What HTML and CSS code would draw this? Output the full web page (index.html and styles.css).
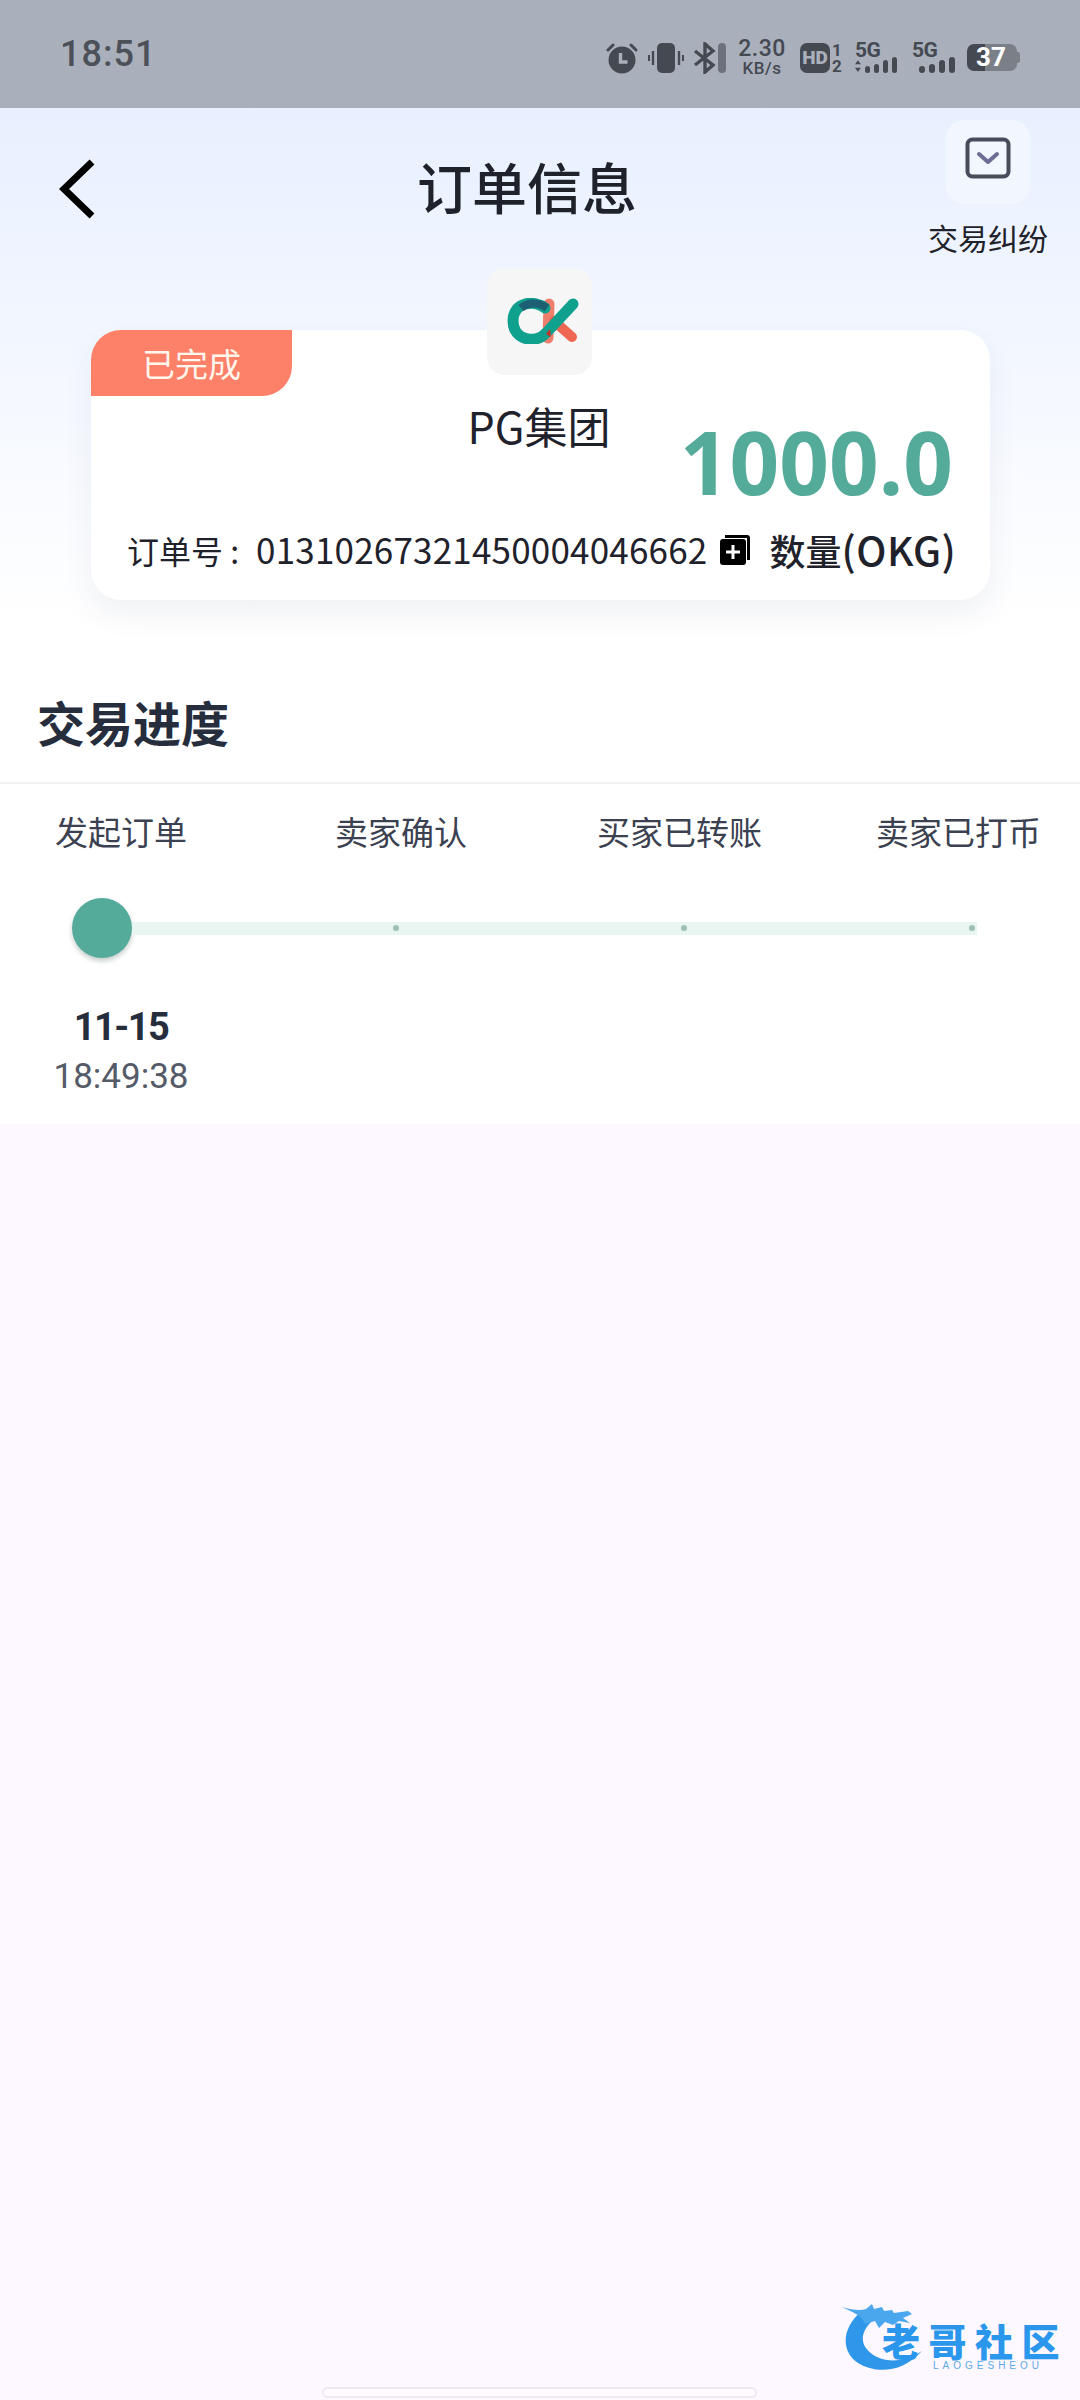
FILE: index.html
```html
<!DOCTYPE html>
<html lang="zh-CN">
  <head>
    <meta charset="UTF-8" />
    <meta name="viewport" content="width=device-width, initial-scale=1.0" />
    <title>订单信息</title>
    <link rel="stylesheet" href="styles.css">
  </head>
  <body>
    <header class="status-bar">
      <span class="time">18:51</span>
      <div class="status-icons">
        <svg class="icon-alarm" width="32" height="32" viewBox="0 0 32 32">
          <circle cx="16" cy="18" r="13.5" fill="#454952"/>
          <path d="M14.5 11v9h7" fill="none" stroke="#a9b0bb" stroke-width="3.4"/>
          <path d="M2 8l5-5M30 8l-5-5" stroke="#454952" stroke-width="3" stroke-linecap="round"/>
        </svg>
        <svg class="icon-vibrate" width="36" height="32" viewBox="0 0 36 32">
          <rect x="9" y="1" width="18" height="30" rx="5" fill="#454952"/>
          <path d="M5 9v14M31 9v14" stroke="#454952" stroke-width="2.4"/>
          <path d="M1 13v6M35 13v6" stroke="#454952" stroke-width="2"/>
        </svg>
        <svg class="icon-bt" width="34" height="32" viewBox="0 0 34 32">
          <path d="M2 9l18 14-8 7V2l8 7L2 23" fill="none" stroke="#454952" stroke-width="3.4"/>
          <rect x="25" y="1" width="8" height="30" rx="4" fill="#6c717b"/>
        </svg>
        <div class="net-speed">
          <span class="speed-value">2.30</span>
          <span class="speed-unit">KB/s</span>
        </div>
        <div class="hd-group">
          <span class="hd">HD</span>
          <div class="hd-nums">
            <span>1</span>
            <span>2</span>
          </div>
        </div>
        <div class="signal">
          <span class="signal-label">5G</span>
          <div class="bars">
            <svg class="arrows" width="7" height="14" viewBox="0 0 7 14">
              <path d="M3.5 0L7 5H0zM3.5 14L7 9H0z" fill="#454952"/>
            </svg>
            <i class="b1"></i><i class="b2"></i><i class="b3"></i><i class="b4"></i>
          </div>
        </div>
        <div class="signal signal-second">
          <span class="signal-label">5G</span>
          <div class="bars">
            <i class="b1"></i><i class="b2"></i><i class="b3"></i><i class="b4"></i>
          </div>
        </div>
        <div class="battery">
          <div class="battery-body">
            <span class="battery-num">37</span>
          </div>
          <div class="battery-cap"></div>
        </div>
      </div>
    </header>

    <section class="top-area">
      <div class="nav">
        <a class="back" href="#">
          <svg width="36" height="60" viewBox="0 0 36 60">
            <path d="M33 3L5 30l28 27" fill="none" stroke="#000" stroke-width="7"/>
          </svg>
        </a>
        <h1 class="page-title">订单信息</h1>
        <a class="dispute" href="#">
          <span class="dispute-btn">
            <svg width="46" height="42" viewBox="0 0 46 42">
              <rect x="2.5" y="2.5" width="41" height="37" rx="5" fill="none" stroke="#474c5b" stroke-width="4"/>
              <path d="M14 17l9 8 9-8" fill="none" stroke="#6b6d94" stroke-width="4" stroke-linecap="round" stroke-linejoin="round"/>
            </svg>
          </span>
          <span class="dispute-text">交易纠纷</span>
        </a>
      </div>

      <div class="order-wrap">
        <div class="logo-box">
          <svg width="72" height="46" viewBox="0 0 72 46">
            <path d="M42 6L41 40" fill="none" stroke="#ef7f6c" stroke-width="11" stroke-linecap="round"/>
            <path d="M47 23L65 39" fill="none" stroke="#ee6752" stroke-width="10" stroke-linecap="round"/>
            <path d="M38 10C28 2 6 3 6 23c0 20 24 23 33 12L66 6" fill="none" stroke="#10a08e" stroke-width="11" stroke-linecap="round"/>
            <path d="M14 10c7-6 18-6 26 0" fill="none" stroke="#1d5f73" stroke-width="8"/>
            <path d="M39 36l4-5 1 8z" fill="#c8322c"/>
          </svg>
        </div>
        <div class="order-card">
          <div class="badge">已完成</div>
          <div class="group-name">PG集团</div>
          <div class="amount">1000.0</div>
          <div class="order-row">
            <div class="order-no">
              <span class="order-label">订单号 :</span>
              <span class="order-digits">01310267321450004046662</span>
            </div>
            <svg class="copy" width="32" height="32" viewBox="0 0 32 32">
              <path d="M6 1h22a3 3 0 0 1 3 3v22h-3V4H6z" fill="#000"/>
              <rect x="1" y="5" width="26" height="26" rx="3" fill="#000"/>
              <path d="M14 11v14M7 18h14" stroke="#fff" stroke-width="3"/>
            </svg>
            <span class="qty">数量<span class="qty-unit">(OKG)</span></span>
          </div>
        </div>
      </div>
    </section>

    <section class="progress">
      <h2 class="progress-title">交易进度</h2>
      <div class="steps">
        <span>发起订单</span>
        <span>卖家确认</span>
        <span>买家已转账</span>
        <span>卖家已打币</span>
      </div>
      <div class="track">
        <div class="knob"></div>
        <div class="line">
          <i class="dot"></i>
          <i class="dot"></i>
          <i class="dot"></i>
        </div>
      </div>
      <div class="stamp">
        <div class="stamp-date">11-15</div>
        <div class="stamp-time">18:49:38</div>
      </div>
    </section>

    <div class="rest"></div>

    <div class="watermark">
      <svg class="dragon" width="84" height="72" viewBox="0 0 84 72">
        <path d="M20 8C0 24-2 48 16 60c18 11 44 10 64-12-18 12-38 12-50 3C16 41 18 26 36 13z" fill="#2f97ea"/>
        <path d="M0 4c10 3 18 4 24 2l6-5 2 5 8-2 2 4 8-1 2 3 14-2 4 3-9 4 7 5-11-2-6 4-8-3-6 6-4-7-10 3C20 12 10 9 0 4z" fill="#4aa7ee"/>
      </svg>
      <div class="mark-text">
        <div class="mark-cn">老哥社区</div>
        <div class="mark-en">LAOGESHEOU</div>
      </div>
    </div>

    <div class="home-bar"></div>
  </body>
</html>
```

FILE: styles.css
```css
* {
  margin: 0;
  padding: 0;
  box-sizing: border-box;
}

html,
body {
  width: 1080px;
  height: 2400px;
  overflow: hidden;
}

body {
  position: relative;
  display: flex;
  flex-direction: column;
  font-family: "Noto Sans CJK SC", "Noto Sans", sans-serif;
  background-color: #fdf7ff;
  color: #1f222b;
}

a {
  color: inherit;
  text-decoration: none;
}

/* status bar */
.status-bar {
  height: 108px;
  background-color: #a9b0bb;
  display: flex;
  justify-content: space-between;
  align-items: center;
  padding: 0 60px;
  color: #454952;
}

.time {
  font-family: Roboto, sans-serif;
  font-size: 36px;
  font-weight: 500;
  letter-spacing: 1px;
  color: #4c5058;
}

.status-icons {
  display: flex;
  align-items: center;
  font-family: Roboto, sans-serif;
  margin-top: 7px;
}

.icon-vibrate {
  margin-left: 10px;
}

.icon-bt {
  margin-left: 9px;
}

.net-speed {
  display: flex;
  flex-direction: column;
  align-items: center;
  width: 46px;
  margin-left: 12px;
}

.speed-value {
  font-size: 23px;
  font-weight: 500;
  line-height: 21px;
  letter-spacing: 0.5px;
}

.speed-unit {
  font-size: 17px;
  font-weight: 500;
  line-height: 18px;
  letter-spacing: 0.5px;
}

.hd-group {
  display: flex;
  align-items: center;
  gap: 2px;
  margin-left: 15px;
}

.hd {
  width: 30px;
  height: 30px;
  border-radius: 7px;
  background-color: #454952;
  color: #a9b0bb;
  font-size: 19px;
  font-weight: 900;
  text-align: center;
  line-height: 30px;
}

.hd-nums {
  display: flex;
  flex-direction: column;
  width: 11px;
  font-size: 17px;
  font-weight: 700;
  line-height: 16px;
}

.signal {
  display: flex;
  flex-direction: column;
  width: 42px;
  height: 30px;
  margin-left: 12px;
}

.signal-second {
  width: 43px;
  margin-left: 15px;
}

.signal-label {
  font-size: 21px;
  font-weight: 700;
  line-height: 14px;
  letter-spacing: -0.5px;
}

.bars {
  display: flex;
  justify-content: flex-end;
  align-items: flex-end;
  gap: 4px;
  height: 16px;
}

.bars i {
  width: 6px;
  background-color: #454952;
  border-radius: 3px;
}

.bars .arrows {
  margin-right: auto;
}

.bars .b1 {
  height: 7px;
}

.bars .b2 {
  height: 9px;
}

.bars .b3 {
  height: 13px;
}

.bars .b4 {
  height: 16px;
}

.battery {
  display: flex;
  align-items: center;
  margin-left: 12px;
}

.battery-body {
  width: 50px;
  height: 27px;
  border-radius: 7px;
  background: linear-gradient(90deg, #454952 18px, #7b7f88 18px);
  padding-left: 9px;
}

.battery-num {
  display: block;
  font-size: 26px;
  font-weight: 700;
  line-height: 27px;
  color: #fff;
}

.battery-cap {
  width: 3px;
  height: 11px;
  background-color: #7b7f88;
  border-radius: 0 2px 2px 0;
}

/* top gradient + order card */
.top-area {
  height: 522px;
  background: linear-gradient(180deg, #e8f0ff 0%, #f0f5ff 35%, #ffffff 100%);
}

.nav {
  position: relative;
  height: 160px;
}

.back {
  position: absolute;
  left: 59px;
  top: 51px;
}

.page-title {
  position: absolute;
  left: 0;
  top: 39px;
  width: 1054px;
  text-align: center;
  font-size: 55px;
  font-weight: 500;
  line-height: 76px;
  color: #1f222b;
}

.dispute {
  position: absolute;
  top: 12px;
  right: 32px;
  width: 120px;
  display: flex;
  flex-direction: column;
  align-items: center;
}

.dispute-btn {
  width: 84px;
  height: 84px;
  border-radius: 18px;
  background-color: #f2f6ff;
  display: flex;
  align-items: center;
  justify-content: center;
  margin-bottom: 12px;
  padding-bottom: 8px;
}

.dispute-text {
  font-size: 30px;
  line-height: 42px;
  color: #1f222b;
}

.order-wrap {
  position: relative;
  padding: 62px 90px 0 91px;
}

.logo-box {
  position: absolute;
  top: 0;
  left: 487px;
  width: 105px;
  height: 107px;
  border-radius: 18px;
  background-color: #f6f6f6;
  display: flex;
  align-items: center;
  justify-content: center;
  z-index: 1;
  padding: 0 0 2px 7px;
}

.order-card {
  position: relative;
  height: 270px;
  border-radius: 30px;
  background-color: #fff;
  box-shadow: 0 14px 30px rgba(60, 70, 100, 0.07);
}

.badge {
  position: absolute;
  left: 0;
  top: 0;
  width: 201px;
  height: 66px;
  border-radius: 30px 0 30px 0;
  background-color: #fd8068;
  color: #fff6ec;
  font-size: 33px;
  line-height: 66px;
  text-align: center;
}

.group-name {
  position: absolute;
  top: 65px;
  left: 22px;
  width: 852px;
  text-align: center;
  font-size: 43px;
  line-height: 60px;
}

.amount {
  position: absolute;
  top: 76px;
  right: 37px;
  font-family: "Noto Sans", sans-serif;
  font-size: 87px;
  font-weight: 700;
  line-height: 110px;
  color: #55ab9a;
}

.order-row {
  position: absolute;
  left: 36px;
  top: 196px;
  display: flex;
  align-items: center;
}

.order-no {
  display: flex;
  align-items: baseline;
  line-height: 46px;
  white-space: nowrap;
}

.order-label {
  font-size: 32px;
  margin-right: 17px;
}

.order-digits {
  font-size: 35px;
  letter-spacing: 0.2px;
}

.copy {
  flex-shrink: 0;
  margin-left: 12px;
  margin-right: 18px;
}

.qty {
  font-size: 36px;
  font-weight: 500;
  line-height: 46px;
  white-space: nowrap;
}

.qty-unit {
  font-size: 40px;
  letter-spacing: 0.5px;
}

/* progress */
.progress {
  height: 494px;
  background-color: #fff;
}

.progress-title {
  height: 154px;
  padding: 58px 0 0 37px;
  font-size: 48px;
  font-weight: 700;
  line-height: 66px;
  color: #262d3d;
  border-bottom: 2px solid #f1f1f2;
}

.steps {
  display: grid;
  grid-template-columns: 280px 262px 279px auto;
  padding: 24px 0 0 55px;
  font-size: 33px;
  line-height: 46px;
  color: #3b4150;
}

.track {
  display: flex;
  align-items: center;
  margin: 44px 0 0 72px;
  width: 905px;
}

.knob {
  width: 60px;
  height: 60px;
  border-radius: 50%;
  background-color: #55ab9a;
  box-shadow: 0 3px 5px rgba(60, 90, 80, 0.3);
  flex-shrink: 0;
}

.line {
  flex: 1;
  height: 13px;
  background-color: #e8f5f1;
  display: flex;
  align-items: center;
  padding-left: 261px;
  gap: 282px;
}

.dot {
  width: 6px;
  height: 6px;
  border-radius: 50%;
  background-color: #9fc0b5;
}

.stamp {
  width: 242px;
  margin-top: 45px;
  text-align: center;
}

.stamp-date {
  font-family: Roboto, sans-serif;
  font-size: 38px;
  font-weight: 700;
  line-height: 48px;
  letter-spacing: -1.5px;
  color: #262d3d;
}

.stamp-time {
  font-family: Roboto, sans-serif;
  font-size: 35px;
  line-height: 52px;
  color: #555a68;
}

.rest {
  flex: 1;
}

/* watermark + gesture bar sit over the page */
.watermark {
  position: absolute;
  left: 842px;
  top: 2303px;
  display: flex;
  align-items: flex-start;
}

.dragon {
  flex-shrink: 0;
}

.mark-text {
  margin-left: -44px;
  padding-top: 20px;
}

.mark-cn {
  font-size: 38px;
  font-weight: 900;
  line-height: 34px;
  letter-spacing: 8.5px;
  white-space: nowrap;
  color: #2a96ec;
}

.mark-en {
  font-family: "Liberation Sans", sans-serif;
  font-size: 10px;
  line-height: 10px;
  letter-spacing: 4px;
  margin: 4px 0 0 51px;
  white-space: nowrap;
  color: #5aa9e8;
}

.home-bar {
  position: absolute;
  left: 322px;
  top: 2387px;
  width: 435px;
  height: 11px;
  border: 2px solid #eee8f2;
  border-radius: 6px;
  background-color: #fffbff;
}
```
